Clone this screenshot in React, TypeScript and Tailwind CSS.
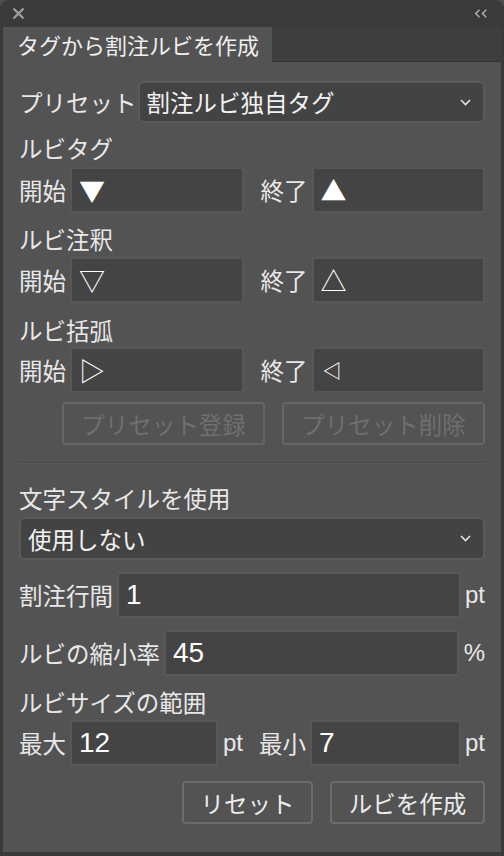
import React from 'react';

const jp = 'font-["Noto_Sans_CJK_JP","Noto_Sans",sans-serif]';

function Chevron() {
  return (
    <svg width="11" height="7" viewBox="0 0 11 7" className="shrink-0">
      <polyline points="1,1 5.5,5.5 10,1" fill="none" stroke="#e6e6e6" strokeWidth="1.6" />
    </svg>
  );
}

function Select({ value, className = '' }: { value: string; className?: string }) {
  return (
    <div
      className={`flex items-center justify-between rounded-md border-2 border-[#5a5a5a] bg-[#434343] pl-[7px] pr-[12px] text-[#f2f2f2] ${className}`}
    >
      <span>{value}</span>
      <Chevron />
    </div>
  );
}

function Field({ value, mono = false, small = false, className = '' }: { value: string; mono?: boolean; small?: boolean; className?: string }) {
  return (
    <div
      className={`flex h-[46px] items-center border-2 border-[#575757] bg-[#444444] pl-[7px] text-white ${
        mono ? 'font-["Liberation_Sans",sans-serif] text-[28px]' : small ? 'pl-[9px] text-[19px] font-bold' : 'text-[26px]'
      } ${className}`}
    >
      {value}
    </div>
  );
}

function TagRow({ start, end, endSmall = false }: { start: string; end: string; endSmall?: boolean }) {
  return (
    <div className="flex h-[46px] gap-[17px]">
      <div className="flex flex-1 items-center gap-[4px]">
        <span className="shrink-0">開始</span>
        <Field value={start} className="flex-1" />
      </div>
      <div className="flex flex-1 items-center gap-[4px]">
        <span className="shrink-0">終了</span>
        <Field value={end} small={endSmall} className="flex-1" />
      </div>
    </div>
  );
}

export default function App() {
  return (
    <div className={`h-[856px] w-[504px] overflow-hidden bg-[#4d4d4d] ${jp}`}>
      <div className="flex h-full flex-col rounded-t-[9px] bg-[#3a3a3a] px-[3px] pb-[4px]">
        {/* title bar */}
        <div className="flex h-[27px] shrink-0 items-center justify-between pl-[9px] pr-[13px]">
          <svg width="13" height="13" viewBox="0 0 13 13">
            <path d="M1.5 1.5 L11.5 11.5 M11.5 1.5 L1.5 11.5" stroke="#9c9c9c" strokeWidth="2.4" />
          </svg>
          <svg width="14" height="9" viewBox="0 0 14 9">
            <path d="M5.5 0.8 L1.6 4.5 L5.5 8.2 M12.3 0.8 L8.4 4.5 L12.3 8.2" fill="none" stroke="#b8b8b8" strokeWidth="1.3" />
          </svg>
        </div>

        {/* tab row */}
        <div className="flex h-[35px] shrink-0 bg-[#3e3e3e]">
          <div className="flex w-[269px] items-center bg-[#535353] pl-[14px] text-[22px] text-[#f0f0f0]">
            タグから割注ルビを作成
          </div>
          <div className="flex-1 border-b border-[#333333]" />
        </div>

        {/* body */}
        <div className="flex flex-1 flex-col bg-[#535353] px-[16px] pt-[19px] text-[23.5px] leading-[28px] text-[#e8e8e8]">
          <div className="flex h-[42px] items-center gap-[1px]">
            <span className="shrink-0">プリセット</span>
            <Select value="割注ルビ独自タグ" className="h-[42px] flex-1" />
          </div>

          <div className="mt-[11px]">ルビタグ</div>
          <div className="mt-[5px]">
            <TagRow start="▼" end="▲" />
          </div>

          <div className="mt-[12px]">ルビ注釈</div>
          <div className="mt-[4px]">
            <TagRow start="▽" end="△" />
          </div>

          <div className="mt-[13px]">ルビ括弧</div>
          <div className="mt-[3px]">
            <TagRow start="▷" end="◁" endSmall />
          </div>

          <div className="mt-[9px] flex justify-end gap-[17px]">
            <div className="flex h-[43px] w-[203px] items-center justify-center rounded-[4px] border-2 border-[#666666] text-[#6f6f6f]">
              プリセット登録
            </div>
            <div className="flex h-[43px] w-[203px] items-center justify-center rounded-[4px] border-2 border-[#666666] text-[#6f6f6f]">
              プリセット削除
            </div>
          </div>

          <div className="mt-[17px] h-[2px] border-b border-[#5a5a5a] bg-[#4a4a4a]" />

          <div className="mt-[20px]">文字スタイルを使用</div>
          <Select value="使用しない" className="mt-[5px] h-[43px] w-full" />

          <div className="mt-[12px] flex h-[46px] items-center">
            <span className="shrink-0">割注行間</span>
            <Field value="1" mono className="ml-[4px] flex-1" />
            <span className={`w-[24px] shrink-0 text-right font-["Liberation_Sans",sans-serif] text-[24px]`}>pt</span>
          </div>

          <div className="mt-[12px] flex h-[46px] items-center">
            <span className="shrink-0">ルビの縮小率</span>
            <Field value="45" mono className="ml-[4px] flex-1" />
            <span className={`w-[26px] shrink-0 text-right font-["Liberation_Sans",sans-serif] text-[24px]`}>%</span>
          </div>

          <div className="mt-[12px]">ルビサイズの範囲</div>
          <div className="mt-[4px] flex h-[46px] items-center">
            <span className="shrink-0">最大</span>
            <Field value="12" mono className="ml-[4px] w-[148px]" />
            <span className={`ml-[5px] font-["Liberation_Sans",sans-serif] text-[24px]`}>pt</span>
            <span className="ml-[16px] shrink-0">最小</span>
            <Field value="7" mono className="ml-[4px] flex-1" />
            <span className={`w-[24px] shrink-0 text-right font-["Liberation_Sans",sans-serif] text-[24px]`}>pt</span>
          </div>

          <div className="mt-[15px] flex justify-end gap-[17px]">
            <div className="flex h-[43px] w-[131px] items-center justify-center rounded-[4px] border-2 border-[#6c6c6c] text-[#ececec]">
              リセット
            </div>
            <div className="flex h-[43px] w-[155px] items-center justify-center rounded-[4px] border-2 border-[#6c6c6c] text-[#ececec]">
              ルビを作成
            </div>
          </div>
        </div>
      </div>
    </div>
  );
}
